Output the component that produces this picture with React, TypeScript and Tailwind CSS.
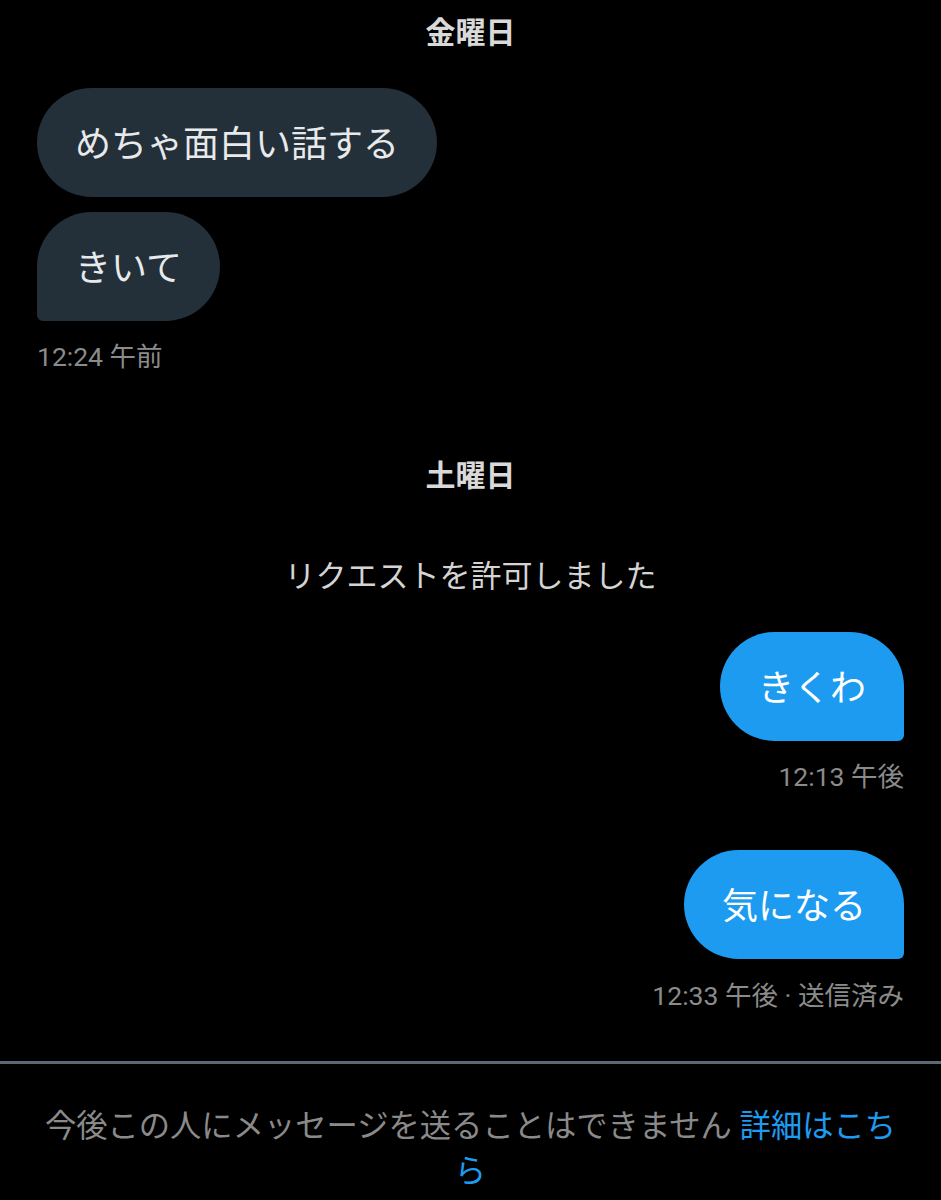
const font = { fontFamily: "Roboto, 'Noto Sans CJK JP', sans-serif" };

function Received({ text, last }: { text: string; last?: boolean }) {
  return (
    <div
      className={`self-start rounded-[55px] bg-[#232f39] px-[38px] pt-[31px] pb-[25px] text-[36px] leading-[53px] text-[#e7e9ea] ${
        last ? "rounded-bl-[6px]" : ""
      }`}
    >
      {text}
    </div>
  );
}

function Sent({ text }: { text: string }) {
  return (
    <div className="self-end rounded-[55px] rounded-br-[6px] bg-[#1d9bf0] px-[38px] pt-[31px] pb-[25px] text-[36px] leading-[53px] text-white">
      {text}
    </div>
  );
}

export default function App() {
  return (
    <div className="min-h-screen w-full bg-black" style={font}>
      <div className="flex flex-col px-[37px]">
        <div className="mt-[13px] text-center text-[30px] font-bold leading-[40px] text-[#d9d9d9]">金曜日</div>

        <div className="mt-[35px] flex flex-col gap-[15px]">
          <Received text="めちゃ面白い話する" />
          <Received text="きいて" last />
        </div>
        <div className="mt-[21px] text-[26.5px] leading-[30px] text-[#8b8b8b]">12:24 午前</div>

        <div className="mt-[84px] text-center text-[30px] font-bold leading-[40px] text-[#d9d9d9]">土曜日</div>
        <div className="mt-[59px] text-center text-[31px] leading-[44px] text-[#d4d4d4]">リクエストを許可しました</div>

        <div className="mt-[33px] flex flex-col">
          <Sent text="きくわ" />
        </div>
        <div className="mt-[21px] text-right text-[26.5px] leading-[30px] text-[#8b8b8b]">12:13 午後</div>

        <div className="mt-[58px] flex flex-col">
          <Sent text="気になる" />
        </div>
        <div className="mt-[22px] text-right text-[26.5px] leading-[30px] text-[#8b8b8b]">12:33 午後 · 送信済み</div>
      </div>

      <div className="mt-[50px] h-[3px] w-full bg-[#5c6873]" />

      <div className="px-[40px] pt-[40px] pb-[10px] text-center text-[31.3px] leading-[45px] text-[#8a8a8a]">
        今後この人にメッセージを送ることはできません <span className="text-[#1d9bf0]">詳細はこちら</span>
      </div>
    </div>
  );
}
